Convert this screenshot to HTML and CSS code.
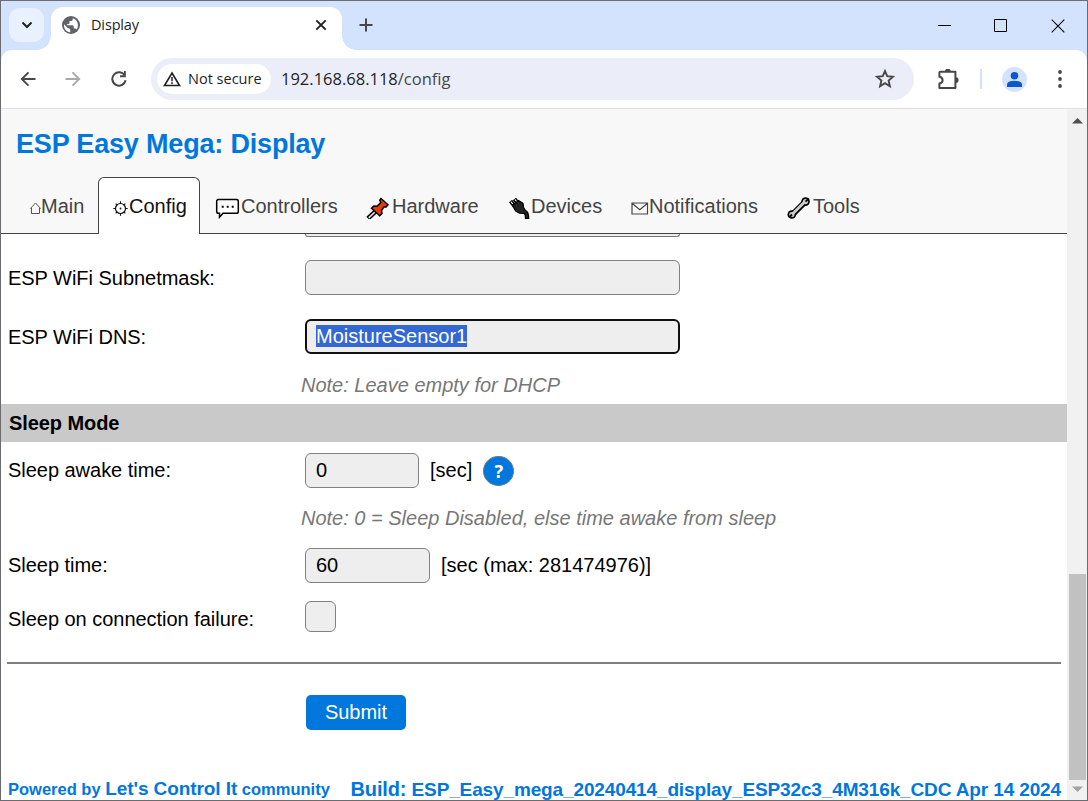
FILE: index.html
```html
<!DOCTYPE html>
<html lang="en">
<head>
<meta charset="utf-8">
<title>Display</title>
<link rel="stylesheet" href="styles.css">
</head>
<body>
<div class="window">
  <div class="titlebar">
    <div class="tab-search"><svg width="12" height="8" viewBox="0 0 12 8"><path d="M1.500 1.500 6 6l4.500-4.500" fill="none" stroke="#1f1f1f" stroke-width="2"/></svg></div>
    <div class="browser-tab">
      <svg class="globe" width="18" height="18" viewBox="0 0 18 18"><circle cx="9" cy="9" r="9" fill="#5f6368"/><path d="M2 8.300 5.800 12q2.200 0 2.400 1.600v2.600C4.500 16 1.700 13 2 8.300zM10.800 2.200l-.2 1.800q-.2 1-1.500 1H7.500v2q0 1-1.300 1h-1v1.300h5.200q1.400 0 1.400 1.500v1.700h1.500q1.200 0 1.600.9C17.300 9 15.600 3.800 10.800 2.200z" fill="#fff"/></svg>
      <span class="tab-title">Display</span>
      <svg width="12" height="12" viewBox="0 0 12 12"><path d="m1.300 1.300 9.400 9.400m0-9.400-9.400 9.400" stroke="#1f1f1f" stroke-width="1.900"/></svg>
    </div>
    <svg class="new-tab" width="14" height="14" viewBox="0 0 14 14"><path d="M7 .5v13M.5 7h13" stroke="#474747" stroke-width="2"/></svg>
    <div class="controls">
      <svg width="13" height="13" viewBox="0 0 13 13"><path d="M0 6.500h13" stroke="#000"/></svg>
      <svg width="13" height="13" viewBox="0 0 13 13"><path d="M.5.5h12v12H.5z" fill="none" stroke="#000"/></svg>
      <svg width="14" height="14" viewBox="0 0 14 14"><path d="m.7.7 12.600 12.600m0-12.600L.7 13.300" stroke="#000" stroke-width="1.100"/></svg>
    </div>
  </div>
  <div class="toolbar">
    <svg class="back" width="16" height="16" viewBox="0 0 16 16"><path d="M15.500 8H2m6.500-6.700L1.800 8l6.700 6.700" fill="none" stroke="#474747" stroke-width="1.900"/></svg>
    <svg class="forward" width="16" height="16" viewBox="0 0 16 16"><path d="M.5 8H14M7.500 1.300 14.200 8l-6.700 6.700" fill="none" stroke="#a9a9a9" stroke-width="1.900"/></svg>
    <svg class="reload" width="16" height="16" viewBox="0 0 16 16"><path d="M14.600 9.300A6.700 6.700 0 1 1 13.800 4.500" fill="none" stroke="#474747" stroke-width="2"/><path d="M14.800 0v6.200H9V4.300h4V0z" fill="#474747"/></svg>
    <div class="omnibox">
      <div class="chip">
        <svg width="18" height="16" viewBox="0 0 18 16"><path d="M9 2 16.500 14.500h-15z" fill="none" stroke="#1f1f1f" stroke-width="1.600"/><path d="M9 6v4.300M9 11.300v1.700" stroke="#1f1f1f" stroke-width="1.500"/></svg>
        <span>Not secure</span>
      </div>
      <span class="url">192.168.68.118<span class="path">/config</span></span>
      <svg class="star" width="20" height="20" viewBox="0 0 20 20"><path d="m10 2 2.200 5.200 5.800.5-4.400 3.800 1.300 5.700-4.900-3-4.900 3 1.300-5.700L2 7.700l5.800-.5z" fill="none" stroke="#474747" stroke-width="1.900"/></svg>
    </div>
    <svg class="puzzle" width="21" height="21" viewBox="0 0 21 21"><path d="M2.200 2.800h15.200v16.200H1.400v-4.600q3.200-.5 3.200-3.200t-3.200-3.400V3.800q0-1 .8-1z" fill="none" stroke="#474747" stroke-width="2" stroke-linejoin="round"/><path d="M7 2.300a2.900 2.500 0 0 1 5.800 0zM18 8.300a2.600 2.800 0 0 1 0 5.600z" fill="#474747"/></svg>
    <span class="separator"></span>
    <svg class="avatar" width="25" height="25" viewBox="0 0 25 25"><circle cx="12.500" cy="12.500" r="12.500" fill="#d3e3fd"/><circle cx="12.500" cy="8.700" r="3.800" fill="#0b57d0"/><path d="M5 20v-2.600q0-3.400 7.500-3.700 7.500.3 7.500 3.700V20z" fill="#0b57d0"/></svg>
    <svg class="dots" width="4" height="18" viewBox="0 0 4 18"><circle cx="2" cy="2" r="1.900"/><circle cx="2" cy="9" r="1.900"/><circle cx="2" cy="16" r="1.900"/></svg>
  </div>
  <div class="viewport">
    <div class="page">
      <header class="header">
        <h1>ESP Easy Mega: Display</h1>
        <nav class="menu">
          <a class="main"><svg width="12" height="22" viewBox="0 0 12 22"><path d="M1.200 11.700 6.500 6l5.300 5.700M2.500 11v5.500h8V11" fill="none" stroke="#555"/></svg>Main</a>
          <a class="config active"><svg width="16" height="22" viewBox="0 0 16 22"><circle cx="7.500" cy="11.500" r="5" fill="none" stroke="#111" stroke-width="1.200"/><path d="M7.500 6.500V4.300m0 12.200v2.200M2.500 11.500H.3m12.200 0h2.200M4 8 2.700 6.700M11 8l1.300-1.300M4 15l-1.300 1.300M11 15l1.300 1.300" stroke="#111" stroke-width="1.100"/><circle cx="7.500" cy="11.500" r=".9" fill="#111"/></svg>Config</a>
          <a class="controllers"><svg width="26" height="22" viewBox="0 0 26 22"><path d="M3.500 2.600h18q1.800 0 1.800 1.800v10q0 1.800-1.800 1.800H8l-3.500 4v-4h-1q-1.800 0-1.800-1.800v-10q0-1.800 1.800-1.800z" fill="#fff" stroke="#000" stroke-width="1.500"/><path d="M6.700 8.700h2v2h-2zm5 0h2v2h-2zm5 0h2v2h-2z"/></svg>Controllers</a>
          <a class="hardware"><svg width="26" height="22" viewBox="0 0 26 22"><path d="m10 14-8 7.500" stroke="#000" stroke-width="4.500"/><path d="m10 14-7.300 6.800" stroke="#ddd" stroke-width="1.700"/><path d="m15 1.500 7 6.300-2 2.200h-2.200l-2.300 3.500.5 3-2.300 2.200-8.200-7.500L8 9l3 .2 3.800-3.700-1-2.400z" fill="#e63c08" stroke="#000" stroke-width="1.500"/></svg>Hardware</a>
          <a class="devices"><svg width="23" height="22" viewBox="0 0 23 22"><path d="m2.500 4 4 5m0-7 4 5" stroke="#000" stroke-width="4"/><path d="m2.800 4.500 2 2.500M7 2.500 9 5" stroke="#fff" stroke-width="1.200"/><path d="m4.500 8.500 6-5 4.500 3 .5 4 2 3q3.200 1.200 3.200 8h-3.200q0-4.700-1.600-5.200l-4.400-.2-3.800-2z" fill="#222" stroke="#000" stroke-width="1.300"/></svg>Devices</a>
          <a class="notifications"><svg width="18" height="22" viewBox="0 0 18 22"><path d="M1 6h15.500v11H1zM1.300 6.500l7.500 6.300 7.400-6.300" fill="none" stroke="#444" stroke-width="1.200"/></svg>Notifications</a>
          <a class="tools"><svg width="26" height="22" viewBox="0 0 26 22"><path d="m5.500 17.500 13-13" stroke="#000" stroke-width="6"/><circle cx="4.800" cy="17.500" r="4.300"/><circle cx="18.500" cy="4.600" r="4.300"/><path d="m5.500 17 13-13" stroke="#ccc" stroke-width="3"/><circle cx="4.800" cy="17.500" r="2.600" fill="#ccc"/><circle cx="18.500" cy="4.600" r="2.600" fill="#ccc"/><path d="m2 20.500 3-3M18.500 4.600l3.500-3" stroke="#000" stroke-width="1.800"/></svg>Tools</a>
        </nav>
      </header>
      <main class="form">
        <div class="cut-field"></div>
        <div class="row subnet"><label>ESP WiFi Subnetmask:</label><div class="input"></div></div>
        <div class="row dns"><label>ESP WiFi DNS:</label><div class="input focused"><span>MoistureSensor1</span></div></div>
        <div class="note">Note: Leave empty for DHCP</div>
        <h2>Sleep Mode</h2>
        <div class="row awake"><label>Sleep awake time:</label><div class="input w-awake">0</div><span class="unit">[sec]</span><span class="help">?</span></div>
        <div class="note second">Note: 0 = Sleep Disabled, else time awake from sleep</div>
        <div class="row sleep"><label>Sleep time:</label><div class="input w-sleep">60</div><span class="unit">[sec (max: 281474976)]</span></div>
        <div class="row failure"><label>Sleep on connection failure:</label><div class="checkbox"></div></div>
        <div class="rule"></div>
        <div class="submit">Submit</div>
        <footer class="footer"><span class="powered">Powered by <b>Let's Control It</b> community</span><span class="build"><b>Build:</b> ESP_Easy_mega_20240414_display_ESP32c3_4M316k_CDC Apr 14 2024</span></footer>
      </main>
    </div>
    <div class="scrollbar">
      <svg width="11" height="6" viewBox="0 0 11 6"><path d="M0 5.500h11L5.500 0z" fill="#505050"/></svg>
      <div class="thumb"></div>
      <svg width="11" height="6" viewBox="0 0 11 6"><path d="M0 .5h11L5.500 6z" fill="#a3a3a3"/></svg>
    </div>
  </div>
</div>
</body>
</html>
```
FILE: styles.css
```css
* { box-sizing: border-box; }
body { margin: 0; overflow: hidden; font: 20px/24px "Liberation Sans", sans-serif; }
svg { display: block; flex: none; }
.window { width: 1088px; height: 801px; border: 1px solid #6b6c70; background: #d3e3fd; display: flex; flex-direction: column; overflow: hidden; }
.titlebar { height: 49px; flex: none; display: flex; font-family: "Open Sans", sans-serif; }
.tab-search { width: 35px; height: 34px; margin: 7px 0 0 8px; border-radius: 11px; background: #e9f1fe; display: flex; align-items: center; justify-content: center; }
.browser-tab { position: relative; width: 291px; height: 43px; margin: 6px 0 0 7px; padding: 0 15px 7px 11px; border-radius: 12px 12px 0 0; background: #fff; display: flex; align-items: center; }
.browser-tab::before, .browser-tab::after { content: ""; position: absolute; bottom: 0; width: 14px; height: 14px; }
.browser-tab::before { left: -14px; background: radial-gradient(circle at 0 0, transparent 13.500px, #fff 14px); }
.browser-tab::after { right: -14px; background: radial-gradient(circle at 100% 0, transparent 13.500px, #fff 14px); }
.tab-title { margin-left: 11px; flex: 1; font-size: 14.500px; letter-spacing: -0.150px; color: #1f1f1f; }
.new-tab { margin: 17px 0 0 17px; }
.controls { margin: 18px 22px 0 auto; display: flex; gap: 44px; }
.controls svg:first-child { margin-right: -1px; }
.toolbar { height: 59px; flex: none; display: flex; align-items: center; padding: 0 24px 0 19px; background: #fff; border-bottom: 1px solid #dfe1e5; border-radius: 11px 11px 0 0; font-family: "Open Sans", sans-serif; }
.forward { margin-left: 29px; }
.reload { margin-left: 30px; }
.omnibox { width: 763px; height: 42px; margin-left: 24px; padding: 0 19px 0 6px; border-radius: 21px; background: #ebeef8; display: flex; align-items: center; }
.chip { width: 114px; height: 30px; border-radius: 15px; background: #fff; display: flex; align-items: center; padding-left: 6px; font-size: 14.500px; color: #1f1f1f; white-space: nowrap; }
.chip span { margin-left: 7px; }
.url { margin-left: 10px; flex: 1; font-size: 16.500px; color: #1f1f1f; white-space: nowrap; }
.path { color: #474747; }
.puzzle { margin-left: 24px; }
.separator { width: 2px; height: 20px; margin-left: 21px; background: #d3e3fd; }
.avatar { margin-left: 20px; }
.dots { margin-left: 31px; fill: #474747; }
.viewport { flex: 1; min-height: 0; display: flex; background: #fff; }
.page { width: 1066px; }
.header { height: 125px; border-bottom: 1px solid #444; background: #f8f8f8; display: flex; flex-direction: column; }
h1 { flex: none; margin: 19px 0 0 15px; font-size: 27px; line-height: 32px; letter-spacing: -0.180px; color: #0077dd; white-space: nowrap; }
.menu { display: flex; flex: none; height: 57px; margin: 17px 0 0 13px; }
.menu a { display: flex; align-items: flex-start; padding: 16px 0 0 14px; border: 1px solid transparent; border-bottom: 0; color: #444; white-space: nowrap; flex: none; }
.menu svg { margin-top: 3px; }
.menu a.active { background: #fff; color: #111; border-color: #444; border-radius: 6px 6px 0 0; }
.main { width: 84px; }
.config { width: 102px; }
.controllers { width: 151px; }
.hardware { width: 142px; }
.devices { width: 123px; }
.notifications { width: 156px; }
.form { color: #000; }
.cut-field { width: 375px; height: 3px; margin-left: 304px; border: 1px solid #767676; border-top: 0; border-radius: 0 0 5px 5px; background: #eee; }
.row { display: flex; align-items: center; height: 35px; padding-left: 7px; }
.row label { width: 297px; white-space: nowrap; letter-spacing: -0.030px; }
.subnet { margin-top: 23px; }
.dns { margin-top: 24px; }
.input { width: 375px; height: 35px; padding-left: 10px; border: 1px solid #808080; border-radius: 6px; background: #eee; line-height: 33px; }
.focused { border: 2px solid #101010; padding-left: 9px; line-height: 31px; }
.focused span { background: #3367d1; color: #fff; }
.note { margin: 19px 0 0 300px; color: #777; font-style: italic; white-space: nowrap; }
h2 { margin: 7px 0 0; height: 38px; padding-left: 8px; background: #c9c9c9; font-size: 20px; line-height: 38px; letter-spacing: -0.080px; }
.awake { margin-top: 11px; }
.awake label, .sleep label, .unit { padding-bottom: 2px; }
.w-awake { width: 114px; }
.w-sleep { width: 125px; }
.unit { margin-left: 11px; white-space: nowrap; }
.help { width: 31px; height: 30px; margin-left: 11px; border: 1px solid #667c91; border-radius: 50%; background: #0077dd; color: #fff; font: bold 18px/28px "Noto Sans", sans-serif; text-align: center; }
.second { margin-top: 18px; }
.sleep { margin-top: 18px; }
.failure { margin-top: 18px; height: 31px; }
.failure label { padding-top: 5px; }
.checkbox { width: 31px; height: 31px; border: 1px solid #808080; border-radius: 6px; background: #eee; }
.rule { height: 2px; margin: 30px 6px 0; background: #808080; }
.submit { width: 100px; height: 35px; margin: 31px 0 0 305px; border-radius: 5px; background: #0077dd; color: #fff; line-height: 35px; text-align: center; }
.footer { display: flex; justify-content: space-between; margin: 47px 6px 0 7px; color: #0077dd; font-weight: bold; white-space: nowrap; }
.powered { font-size: 16.500px; }
.powered b { font-size: 19px; letter-spacing: -0.080px; }
.build { font-size: 19px; letter-spacing: -0.130px; }
.build b { font-size: 20px; }
.scrollbar { width: 20px; background: #f1f1f1; display: flex; flex-direction: column; align-items: center; padding: 9px 0 8px; }
.thumb { width: 17px; height: 206px; margin: auto 0 6px 1px; background: #c1c1c1; }
```
